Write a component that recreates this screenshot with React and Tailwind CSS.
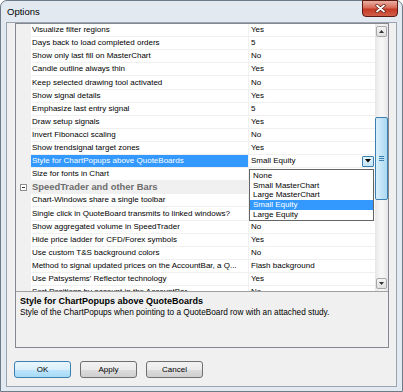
const rows = [
  { n: 'Visualize filter regions', v: 'Yes' },
  { n: 'Days back to load completed orders', v: '5' },
  { n: 'Show only last fill on MasterChart', v: 'No' },
  { n: 'Candle outline always thin', v: 'Yes' },
  { n: 'Keep selected drawing tool activated', v: 'No', tall: true },
  { n: 'Show signal details', v: 'Yes' },
  { n: 'Emphasize last entry signal', v: '5' },
  { n: 'Draw setup signals', v: 'Yes' },
  { n: 'Invert Fibonacci scaling', v: 'No' },
  { n: 'Show trendsignal target zones', v: 'Yes' },
  { n: 'Style for ChartPopups above QuoteBoards', v: 'Small Equity', sel: true },
  { n: 'Size for fonts in Chart', v: '' },
  { cat: 'SpeedTrader and other Bars' },
  { n: 'Chart-Windows share a single toolbar', v: '' },
  { n: 'Single click in QuoteBoard transmits to linked windows?', v: '', tall: true },
  { n: 'Show aggregated volume in SpeedTrader', v: 'No' },
  { n: 'Hide price ladder for CFD/Forex symbols', v: 'Yes' },
  { n: 'Use custom T&S background colors', v: 'No' },
  { n: 'Method to signal updated prices on the AccountBar, a Q...', v: 'Flash background' },
  { n: "Use Patsystems' Reflector technology", v: 'Yes' },
  { n: 'Sort Positions by account in the AccountBar', v: 'No' },
];

function Row({ r }) {
  const h = r.tall ? 'h-[14px]' : 'h-[13px]';
  if (r.cat) {
    return (
      <div className={`${h} flex shrink-0 items-start`}>
        <div className="w-[15px] h-[13px] flex items-center justify-center">
          <div className="w-[7px] h-[7px] border border-[#8f8f8f] bg-white flex items-center justify-center">
            <div className="w-[3px] h-px bg-[#333]" />
          </div>
        </div>
        <div className="flex-1 h-[12px] pl-[1px] flex items-center text-[9.4px] font-bold text-[#6d6d6d] leading-none">
          {r.cat}
        </div>
      </div>
    );
  }
  return (
    <div className={`${h} flex shrink-0 items-start`}>
      <div className="w-[15px]" />
      <div
        className={`w-[217px] ${r.tall ? 'h-[13px]' : 'h-[12px]'} pl-[1px] flex items-center whitespace-nowrap overflow-hidden text-[8px] leading-none ${
          r.sel ? 'bg-[#3399ff] text-white' : 'bg-white text-black'
        }`}
      >
        {r.n}
      </div>
      <div className="w-px" />
      <div
        className={`flex-1 ${r.tall ? 'h-[13px]' : 'h-[12px]'} bg-white pl-[2px] flex items-center whitespace-nowrap overflow-hidden text-[8px] leading-none text-black`}
      >
        <span className="flex-1">{r.v}</span>
        {r.sel && (
          <div className="w-[12px] h-[11px] mr-[1px] border border-[#3c7fb1] rounded-[1px] bg-[linear-gradient(#e5f4fc,#c4e5f6)] flex items-center justify-center">
            <svg width="6" height="4" viewBox="0 0 6 4">
              <path d="M0 0h6L3 3.5z" fill="#000" />
            </svg>
          </div>
        )}
      </div>
    </div>
  );
}

function ArrowBtn({ up }) {
  return (
    <div className="w-[11px] h-[11px] mx-auto border border-[#a7a7a7] rounded-[2px] bg-[linear-gradient(#f5f5f5,#e0e0e0)] flex items-center justify-center">
      <svg width="5" height="3" viewBox="0 0 5 3">
        {up ? <path d="M0 3h5L2.5 0z" fill="#333" /> : <path d="M0 0h5L2.5 3z" fill="#333" />}
      </svg>
    </div>
  );
}

function Scrollbar() {
  return (
    <div className="w-[13px] bg-[linear-gradient(90deg,#e6e6e6,#f6f6f6_40%,#f6f6f6_60%,#e6e6e6)] flex flex-col pt-[2px] pb-[2px]">
      <ArrowBtn up />
      <div className="flex-1 flex flex-col">
        <div className="mt-[80px] h-[83px] border border-[#3c7fb1] rounded-[2px] bg-[linear-gradient(90deg,#d9f0fc,#c2e4f6_50%,#a9d9f2)] flex flex-col items-center justify-center gap-[1px]">
          <div className="w-[5px] h-px bg-[#3c7fb1]" />
          <div className="w-[5px] h-px bg-[#3c7fb1]" />
          <div className="w-[5px] h-px bg-[#3c7fb1]" />
        </div>
      </div>
      <ArrowBtn />
    </div>
  );
}

function Btn({ children, def }) {
  return (
    <div
      className={`w-[57px] h-[17px] rounded-[3px] border flex items-center justify-center text-[8px] text-black leading-none ${
        def
          ? 'border-[#3c7fb1] bg-[linear-gradient(#eaf6fd_0%,#d9f0fc_50%,#bee6fd_50%,#a7d9f5_100%)]'
          : 'border-[#707070] bg-[linear-gradient(#f2f2f2_0%,#ebebeb_50%,#dddddd_50%,#cfcfcf_100%)]'
      }`}
    >
      {children}
    </div>
  );
}

export default function App() {
  return (
    <div className="relative w-[403px] h-[392px] font-['Liberation_Sans',Arial,sans-serif] bg-white">
      <div className="w-full h-full flex flex-col border border-[#6d7a88] rounded-t-[7px] bg-[#e2e9f1] px-[5px] pb-[4px]">
        {/* title bar */}
        <div className="h-[21px] flex items-start justify-between shrink-0 -mx-[5px]">
          <span className="ml-[6px] mt-[6px] text-[9.5px] leading-none text-black">Options</span>
          <div className="w-[36px] h-[17px] -mt-px mr-[4px] rounded-b-[4px] border border-[#5b1a12] bg-[linear-gradient(#ebb0a4,#d66a57_45%,#c53a25_55%,#d0604a)] flex items-center justify-center">
            <svg width="11" height="9" viewBox="0 0 11 9">
              <path d="M2 1.5L9 7.5M9 1.5L2 7.5" stroke="#5a1b13" strokeWidth="3.2" strokeLinecap="round" />
              <path d="M2 1.5L9 7.5M9 1.5L2 7.5" stroke="#ffffff" strokeWidth="1.8" strokeLinecap="round" />
            </svg>
          </div>
        </div>
        {/* client area */}
        <div className="flex-1 border border-[#9aa5b1] bg-[#f0f0f0] flex flex-col">
          <div className="ml-[8px] mr-[7px] h-[325px] border border-[#828790] flex flex-col shrink-0">
            <div className="h-[267px] flex bg-[#f0f0f0] overflow-hidden shrink-0">
              <div className="flex-1 flex flex-col overflow-hidden">
                {rows.map((r, i) => (
                  <Row key={i} r={r} />
                ))}
              </div>
              <Scrollbar />
            </div>
            <div className="flex-1 border-t border-[#a0a0a0] bg-[#f0f0f0] pl-[4px] pt-[5px] leading-none text-black">
              <div className="font-bold text-[9px]">Style for ChartPopups above QuoteBoards</div>
              <div className="mt-[3px] text-[8.25px]">Style of the ChartPopups when pointing to a QuoteBoard row with an attached study.</div>
            </div>
          </div>
          <div className="mt-[13px] ml-[7px] flex gap-[9px]">
            <Btn def>OK</Btn>
            <Btn>Apply</Btn>
            <Btn>Cancel</Btn>
          </div>
        </div>
      </div>
      {/* dropdown list */}
      <div className="absolute left-[249px] top-[169px] w-[125px] h-[52px] border border-[#646464] bg-white flex flex-col text-[8px] leading-none text-black pt-[1px]">
        <div className="h-[10px] pl-[3px] flex items-center">None</div>
        <div className="h-[10px] pl-[3px] flex items-center">Small MasterChart</div>
        <div className="h-[10px] pl-[3px] flex items-center">Large MasterChart</div>
        <div className="h-[10px] pl-[3px] flex items-center bg-[#3399ff] text-white">Small Equity</div>
        <div className="h-[10px] pl-[3px] flex items-center">Large Equity</div>
      </div>
    </div>
  );
}
